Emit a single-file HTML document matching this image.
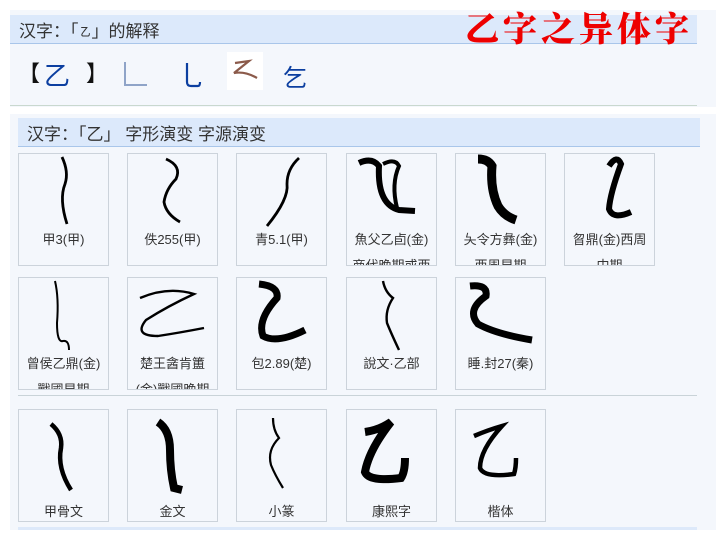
<!DOCTYPE html>
<html><head><meta charset="utf-8"><style>
body{margin:0;background:#fff;width:726px;height:539px;position:relative;overflow:hidden;font-family:"Liberation Sans","Noto Sans CJK SC",sans-serif;}
.a{position:absolute}
.panel{background:#f4f7fc}
.bar{background:#dce9fb;border-bottom:1px solid #a9c6ea;color:#333;font-size:17px;}
.cell{position:absolute;width:89px;height:111px;border:1px solid #ccd3db;background:#f4f7fc;overflow:hidden}
.cell svg{position:absolute;left:0;top:0}
.cell .t{position:absolute;top:76px;left:0;width:100%;text-align:center;font-size:13px;color:#333;line-height:20px;white-space:nowrap}
.cell .t2{top:102px}
.bt .t{top:92px}
</style></head><body>
<div class="a panel" style="left:10px;top:10px;width:706px;height:97px"></div>
<div class="a bar" style="left:10px;top:15px;width:687px;height:29px;line-height:34px;padding-left:9px;box-sizing:border-box">汉字：「<span style="font-size:13px">㇠</span>」的解释</div>
<div class="a" style="left:465px;top:5px;color:#e00;font-size:34px;font-weight:900;font-family:'Noto Serif CJK SC',serif;letter-spacing:4px;line-height:44px">乙字之异体字</div>
<div class="a" style="left:10px;top:105px;width:687px;height:1px;background:#c9d8cf"></div>
<div class="a" style="left:18px;top:56px;font-size:22px;color:#111">【</div>
<div class="a" style="left:44px;top:56px;font-size:26px;color:#0c3fa0">乙</div>
<div class="a" style="left:86px;top:56px;font-size:22px;color:#111">】</div>
<svg class="a" style="left:120px;top:60px" width="30" height="30"><path d="M5 2 V25 H27" stroke="#8fa4c8" stroke-width="2" fill="none"/></svg>
<svg class="a" style="left:180px;top:60px" width="30" height="30"><path d="M7 3 V22 Q7 26 11 26 H18 Q20 26 20 22" stroke="#0c3fa0" stroke-width="2.2" fill="none"/></svg>
<div class="a" style="left:227px;top:52px;width:36px;height:38px;background:#fff"></div>
<svg class="a" style="left:229px;top:58px" width="32" height="28"><path d="M6 5 L20 3 L5 15 Q16 13 28 20" stroke="#8b5a4a" stroke-width="2.2" fill="none"/></svg>
<div class="a" style="left:283px;top:58px;font-size:24px;color:#0c3fa0">乞</div>

<div class="a panel" style="left:10px;top:114px;width:706px;height:416px"></div>
<div class="a bar" style="left:18px;top:118px;width:682px;height:29px;line-height:34px;padding-left:9px;box-sizing:border-box">汉字：「乙」 字形演变 字源演变</div>

<div class="cell" style="left:18px;top:153px"><svg width="89" height="80"><path d="M43 3 Q50 18 46 30 Q40 45 48 70" stroke="#000" stroke-width="2.8" fill="none"/></svg><div class="t">甲3(甲)</div></div>
<div class="cell" style="left:127px;top:153px"><svg width="89" height="80"><path d="M38 5 Q54 12 48 25 Q38 35 36 48 Q38 60 52 68" stroke="#000" stroke-width="2.8" fill="none"/></svg><div class="t">佚255(甲)</div></div>
<div class="cell" style="left:236px;top:153px"><svg width="89" height="80"><path d="M62 4 Q50 15 50 30 Q52 45 30 72" stroke="#000" stroke-width="2.8" fill="none"/></svg><div class="t">青5.1(甲)</div></div>
<div class="cell" style="left:346px;top:153px"><svg width="89" height="80"><path d="M12 9 Q25 3 32 12 Q30 50 52 56 L68 57" stroke="#000" stroke-width="6" fill="none"/><path d="M36 10 Q48 4 52 12 Q44 30 50 54" stroke="#000" stroke-width="4" fill="none"/></svg><div class="t">魚父乙卣(金)</div><div class="t t2">商代晚期或西</div></div>
<div class="cell" style="left:455px;top:153px"><svg width="89" height="80"><path d="M22 5 Q32 5 36 12 Q34 35 42 52 Q48 62 60 66" stroke="#000" stroke-width="9" fill="none"/></svg><div class="t">夨令方彝(金)</div><div class="t t2">西周早期</div></div>
<div class="cell" style="left:564px;top:153px"><svg width="89" height="80"><path d="M44 12 Q52 0 56 10 Q45 40 44 55 Q48 66 66 58" stroke="#000" stroke-width="6" fill="none"/></svg><div class="t">曶鼎(金)西周</div><div class="t t2">中期</div></div>

<div class="cell" style="left:18px;top:277px"><svg width="89" height="80"><path d="M36 3 Q40 20 38 45 Q38 65 44 63 Q50 62 50 72" stroke="#000" stroke-width="2" fill="none"/></svg><div class="t">曾侯乙鼎(金)</div><div class="t t2">戰國早期</div></div>
<div class="cell" style="left:127px;top:277px"><svg width="89" height="80"><path d="M12 20 Q40 8 66 16 Q40 28 18 42 Q5 58 30 58 Q50 55 76 50" stroke="#000" stroke-width="2.4" fill="none"/></svg><div class="t">楚王酓肯簠</div><div class="t t2">(金)戰國晚期</div></div>
<div class="cell" style="left:236px;top:277px"><svg width="89" height="80"><path d="M22 6 Q42 8 40 20 Q20 42 26 58 Q40 66 68 52" stroke="#000" stroke-width="7" fill="none"/></svg><div class="t">包2.89(楚)</div></div>
<div class="cell" style="left:346px;top:277px"><svg width="89" height="80"><path d="M36 3 Q38 14 46 20 Q38 32 40 45 Q44 55 52 72" stroke="#000" stroke-width="2.4" fill="none"/></svg><div class="t">說文·乙部</div></div>
<div class="cell" style="left:455px;top:277px"><svg width="89" height="80"><path d="M14 8 Q32 6 30 18 Q10 32 22 46 Q40 56 76 62" stroke="#000" stroke-width="7" fill="none"/></svg><div class="t">睡.封27(秦)</div></div>

<div class="a" style="left:18px;top:395px;width:679px;height:1px;background:#c9d3d8"></div>

<div class="cell bt" style="left:18px;top:409px"><svg width="89" height="90"><path d="M32 14 Q44 24 42 38 Q38 58 52 80" stroke="#000" stroke-width="4.5" fill="none"/></svg><div class="t">甲骨文</div></div>
<div class="cell bt" style="left:127px;top:409px"><svg width="89" height="90"><path d="M30 12 Q42 20 42 40 Q42 60 46 78 L54 80" stroke="#000" stroke-width="8" fill="none"/></svg><div class="t">金文</div></div>
<div class="cell bt" style="left:236px;top:409px"><svg width="89" height="90"><path d="M36 8 Q36 20 42 28 Q30 40 34 55 Q38 65 46 78" stroke="#000" stroke-width="2.2" fill="none"/></svg><div class="t">小篆</div></div>
<div class="cell bt" style="left:346px;top:409px"><svg width="89" height="90"><path d="M18 22 Q32 20 44 12 Q22 40 18 62 Q22 72 54 68 Q58 62 58 48" stroke="#000" stroke-width="8" fill="none"/></svg><div class="t">康熙字</div></div>
<div class="cell bt" style="left:455px;top:409px"><svg width="89" height="90"><path d="M18 26 Q32 20 46 16 Q24 40 24 58 Q28 68 58 64 Q60 58 60 48" stroke="#000" stroke-width="4.5" fill="none"/></svg><div class="t">楷体</div></div>

<div class="a" style="left:18px;top:527px;width:679px;height:3px;background:#dde9fa"></div>
</body></html>
